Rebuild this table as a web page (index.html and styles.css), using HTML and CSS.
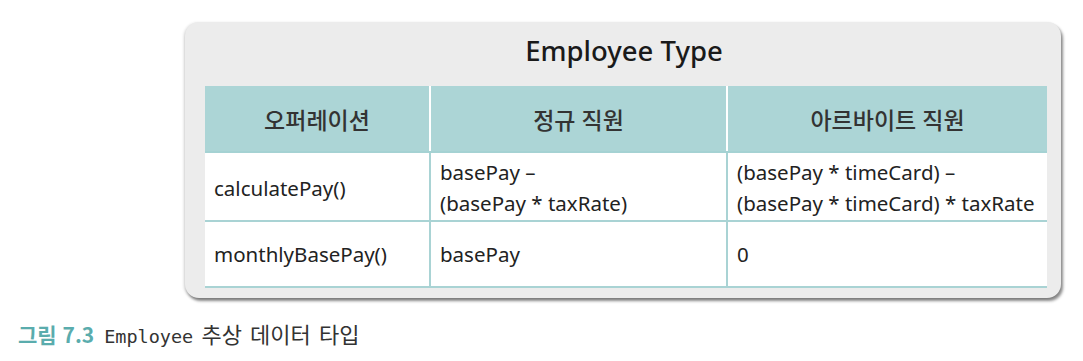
FILE: index.html
```html
<!DOCTYPE html>
<html lang="ko">
<head>
<meta charset="utf-8">
<link rel="stylesheet" href="styles.css">
</head>
<body>
<div class="page">
  <div class="card">
    <div class="title">Employee Type</div>
    <table class="grid">
      <colgroup>
        <col class="c1"><col class="c2"><col class="c3">
      </colgroup>
      <thead>
        <tr><th>오퍼레이션</th><th>정규 직원</th><th>아르바이트 직원</th></tr>
      </thead>
      <tbody>
        <tr class="r1">
          <td>calculatePay()</td>
          <td>basePay –<br>(basePay * taxRate)</td>
          <td>(basePay * timeCard) –<br>(basePay * timeCard) * taxRate</td>
        </tr>
        <tr class="r2">
          <td>monthlyBasePay()</td>
          <td>basePay</td>
          <td>0</td>
        </tr>
      </tbody>
    </table>
  </div>
  <div class="caption">
    <span class="fig">그림 7.3</span>
    <span class="desc"><span class="mono">Employee</span> 추상 데이터 타입</span>
  </div>
</div>
</body>
</html>
```

FILE: styles.css
```css
html, body {
  margin: 0;
  padding: 0;
  background: #ffffff;
}
.page {
  width: 1083px;
  height: 361px;
  display: flex;
  flex-direction: column;
  align-items: flex-start;
  font-family: "Noto Sans", "Noto Sans CJK KR", sans-serif;
  color: #222;
}
.card {
  margin: 22px 0 0 185px;
  width: 876px;
  height: 276px;
  box-sizing: border-box;
  padding: 0 14px 0 20px;
  background: #ececec;
  border-radius: 14px;
  box-shadow: 2px 3px 3px rgba(0,0,0,0.45), -1px 1px 3px rgba(0,0,0,0.18);
  display: flex;
  flex-direction: column;
}
.title {
  height: 64px;
  display: flex;
  align-items: center;
  justify-content: center;
  font-size: 27.5px;
  font-weight: 500;
  color: #1a1a1a;
  padding: 0 4px 8px 0;
  box-sizing: border-box;
}
.grid {
  border-collapse: collapse;
  table-layout: fixed;
  width: 842px;
  background: #ffffff;
}
.c1 { width: 225px; }
.c2 { width: 297px; }
.c3 { width: 320px; }
.grid th {
  background: #acd5d6;
  height: 66px;
  padding: 0;
  font-size: 23px;
  font-weight: 500;
  color: #333;
  text-align: center;
  border-left: 2px solid #ffffff;
  border-bottom: 2px solid #a5d2d3;
  box-sizing: border-box;
}
.grid th:first-child { border-left: none; }
.grid td {
  padding: 0 0 0 9px;
  font-size: 20.5px;
  line-height: 31px;
  color: #222;
  vertical-align: middle;
  border-left: 2px solid #a9d3d4;
  border-bottom: 2px solid #a9d3d4;
}
.grid td:first-child { border-left: none; }
.grid tr.r1 td { height: 64px; padding-top: 3px; }
.grid tr.r2 td { height: 64px; }
.caption {
  margin: 19px 0 0 18px;
  display: flex;
  align-items: baseline;
  gap: 10px;
  font-size: 21px;
}
.fig {
  color: #5aacad;
  font-weight: 700;
  font-family: "Noto Sans CJK KR", "Noto Sans", sans-serif;
}
.desc {
  color: #333;
  font-family: "Noto Sans CJK KR", sans-serif;
  font-size: 22px;
  word-spacing: 2px;
}
.mono {
  font-family: "DejaVu Sans Mono", monospace;
  font-size: 18.5px;
}
```
